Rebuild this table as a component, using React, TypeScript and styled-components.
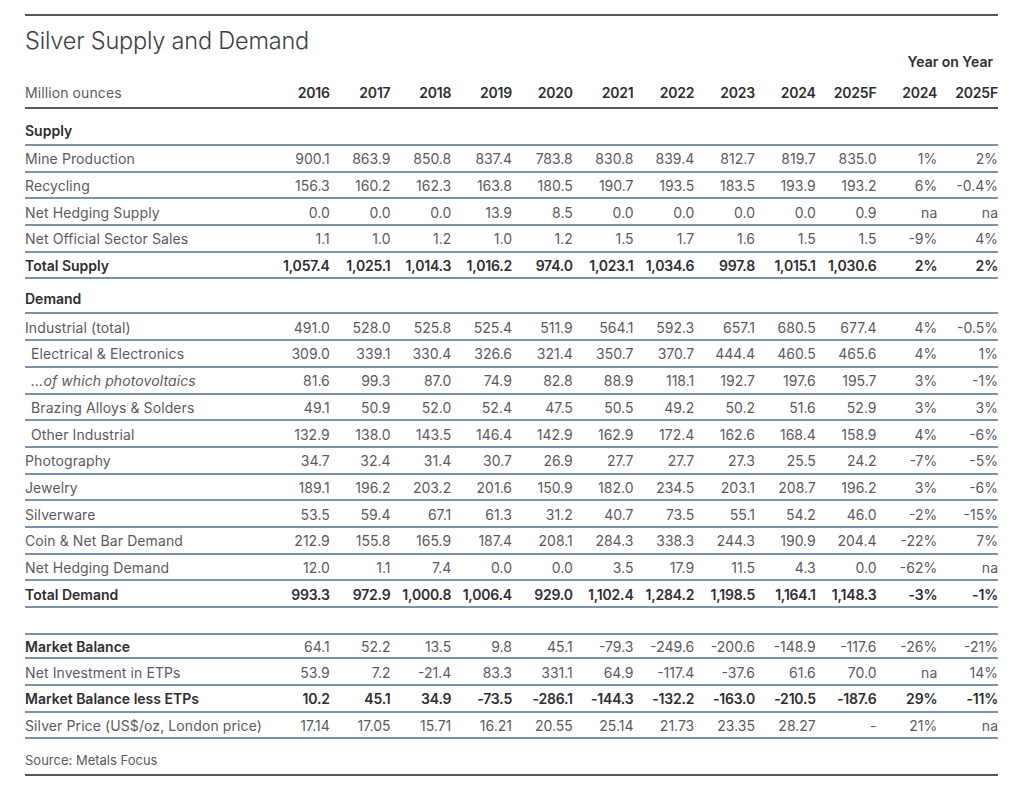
import styled, { createGlobalStyle, css } from "styled-components";

const GlobalStyle = createGlobalStyle`
    html, body {
        margin: 0;
        padding: 0;
        background: #ffffff;
    }
    body {
        font-family: Inter, "Noto Sans", "Liberation Sans", sans-serif;
        color: #5a5b60;
    }
`;

const RULE_BLUE = "#7893ad";
const RULE_DARK = "#56575c";
const TEXT = "#5a5b60";
const STRONG = "#2d2e33";

const Sheet = styled.div`
    width: 973px;
    margin-left: 25px;
    padding-top: 14px;
`;

const TopRule = styled.div`
    border-top: 2px solid ${RULE_DARK};
`;

const Title = styled.h1`
    margin: 13px 0 0;
    font-size: 23.5px;
    line-height: 24px;
    font-weight: 300;
    color: #3e3f44;
    letter-spacing: -0.2px;
`;

const Grid = styled.div`
    display: grid;
    grid-template-columns: 244px repeat(12, 1fr);
    align-items: center;
`;

const YoYRow = styled(Grid)`
    height: 15px;
`;

const YoYLabel = styled.div`
    grid-column: 12 / span 2;
    text-align: right;
    padding-right: 5px;
    font-size: 14px;
    font-weight: 600;
    color: ${STRONG};
`;

const HeaderRow = styled(Grid)`
    height: 41px;
    box-sizing: border-box;
    align-items: end;
    padding-bottom: 6px;
    border-bottom: 2px solid ${RULE_DARK};
`;

const SectionRow = styled(Grid)<{ $tall?: boolean }>`
    height: ${p => (p.$tall ? "37px" : "35px")};
    box-sizing: border-box;
    align-items: end;
    padding-bottom: 5px;
    border-bottom: 2px solid ${RULE_BLUE};
`;

const Row = styled(Grid)<{ $top?: boolean }>`
    height: 26.7px;
    box-sizing: border-box;
    padding-top: 2px;
    border-bottom: 2px solid ${RULE_BLUE};
    ${p => p.$top && css`border-top: 2px solid ${RULE_BLUE};`}
`;

const Spacer = styled.div`
    height: 24.7px;
`;

const Label = styled.div<{ $bold?: boolean; $indent?: boolean; $italic?: boolean }>`
    font-size: 14px;
    line-height: 16px;
    white-space: nowrap;
    color: ${p => (p.$bold ? STRONG : TEXT)};
    font-weight: ${p => (p.$bold ? 600 : 400)};
    font-style: ${p => (p.$italic ? "italic" : "normal")};
    padding-left: ${p => (p.$indent ? "6px" : "0")};
    letter-spacing: ${p => (p.$bold ? "0" : "0.1px")};
`;

const Cell = styled.div<{ $bold?: boolean }>`
    font-size: 14px;
    line-height: 16px;
    text-align: right;
    white-space: nowrap;
    color: ${p => (p.$bold ? STRONG : TEXT)};
    font-weight: ${p => (p.$bold ? 600 : 400)};
    letter-spacing: ${p => (p.$bold ? "-0.2px" : "0")};
`;

const SourceRow = styled.div`
    height: 37px;
    box-sizing: border-box;
    display: flex;
    align-items: center;
    padding-top: 6px;
    font-size: 13px;
    color: ${TEXT};
    border-bottom: 2px solid ${RULE_DARK};
`;

type Line = {
    label: string;
    values: string[];
    bold?: boolean;
    boldLabel?: boolean;
    indent?: boolean;
    italic?: boolean;
    top?: boolean;
};

const years = ["2016", "2017", "2018", "2019", "2020", "2021", "2022", "2023", "2024", "2025F", "2024", "2025F"];

const supply: Line[] = [
    { label: "Mine Production", values: ["900.1", "863.9", "850.8", "837.4", "783.8", "830.8", "839.4", "812.7", "819.7", "835.0", "1%", "2%"] },
    { label: "Recycling", values: ["156.3", "160.2", "162.3", "163.8", "180.5", "190.7", "193.5", "183.5", "193.9", "193.2", "6%", "-0.4%"] },
    { label: "Net Hedging Supply", values: ["0.0", "0.0", "0.0", "13.9", "8.5", "0.0", "0.0", "0.0", "0.0", "0.9", "na", "na"] },
    { label: "Net Official Sector Sales", values: ["1.1", "1.0", "1.2", "1.0", "1.2", "1.5", "1.7", "1.6", "1.5", "1.5", "-9%", "4%"] },
    { label: "Total Supply", bold: true, values: ["1,057.4", "1,025.1", "1,014.3", "1,016.2", "974.0", "1,023.1", "1,034.6", "997.8", "1,015.1", "1,030.6", "2%", "2%"] },
];

const demand: Line[] = [
    { label: "Industrial (total)", values: ["491.0", "528.0", "525.8", "525.4", "511.9", "564.1", "592.3", "657.1", "680.5", "677.4", "4%", "-0.5%"] },
    { label: "Electrical & Electronics", indent: true, values: ["309.0", "339.1", "330.4", "326.6", "321.4", "350.7", "370.7", "444.4", "460.5", "465.6", "4%", "1%"] },
    { label: "...of which photovoltaics", indent: true, italic: true, values: ["81.6", "99.3", "87.0", "74.9", "82.8", "88.9", "118.1", "192.7", "197.6", "195.7", "3%", "-1%"] },
    { label: "Brazing Alloys & Solders", indent: true, values: ["49.1", "50.9", "52.0", "52.4", "47.5", "50.5", "49.2", "50.2", "51.6", "52.9", "3%", "3%"] },
    { label: "Other Industrial", indent: true, values: ["132.9", "138.0", "143.5", "146.4", "142.9", "162.9", "172.4", "162.6", "168.4", "158.9", "4%", "-6%"] },
    { label: "Photography", values: ["34.7", "32.4", "31.4", "30.7", "26.9", "27.7", "27.7", "27.3", "25.5", "24.2", "-7%", "-5%"] },
    { label: "Jewelry", values: ["189.1", "196.2", "203.2", "201.6", "150.9", "182.0", "234.5", "203.1", "208.7", "196.2", "3%", "-6%"] },
    { label: "Silverware", values: ["53.5", "59.4", "67.1", "61.3", "31.2", "40.7", "73.5", "55.1", "54.2", "46.0", "-2%", "-15%"] },
    { label: "Coin & Net Bar Demand", values: ["212.9", "155.8", "165.9", "187.4", "208.1", "284.3", "338.3", "244.3", "190.9", "204.4", "-22%", "7%"] },
    { label: "Net Hedging Demand", values: ["12.0", "1.1", "7.4", "0.0", "0.0", "3.5", "17.9", "11.5", "4.3", "0.0", "-62%", "na"] },
    { label: "Total Demand", bold: true, values: ["993.3", "972.9", "1,000.8", "1,006.4", "929.0", "1,102.4", "1,284.2", "1,198.5", "1,164.1", "1,148.3", "-3%", "-1%"] },
];

const balance: Line[] = [
    { label: "Market Balance", boldLabel: true, top: true, values: ["64.1", "52.2", "13.5", "9.8", "45.1", "-79.3", "-249.6", "-200.6", "-148.9", "-117.6", "-26%", "-21%"] },
    { label: "Net Investment in ETPs", values: ["53.9", "7.2", "-21.4", "83.3", "331.1", "64.9", "-117.4", "-37.6", "61.6", "70.0", "na", "14%"] },
    { label: "Market Balance less ETPs", bold: true, values: ["10.2", "45.1", "34.9", "-73.5", "-286.1", "-144.3", "-132.2", "-163.0", "-210.5", "-187.6", "29%", "-11%"] },
    { label: "Silver Price (US$/oz, London price)", values: ["17.14", "17.05", "15.71", "16.21", "20.55", "25.14", "21.73", "23.35", "28.27", "-", "21%", "na"] },
];

const DataRow = ({ line }: { line: Line }) => (
    <Row $top={line.top}>
        <Label $bold={line.bold || line.boldLabel} $indent={line.indent} $italic={line.italic}>
            {line.label}
        </Label>
        {line.values.map((v, i) => (
            <Cell key={i} $bold={line.bold}>{v}</Cell>
        ))}
    </Row>
);

export default function App() {
    return (
        <>
            <GlobalStyle />
            <Sheet>
                <TopRule />
                <Title>Silver Supply and Demand</Title>
                <YoYRow>
                    <YoYLabel>Year on Year</YoYLabel>
                </YoYRow>
                <HeaderRow>
                    <Label>Million ounces</Label>
                    {years.map((y, i) => (
                        <Cell key={i} $bold>{y}</Cell>
                    ))}
                </HeaderRow>

                <SectionRow $tall>
                    <Label $bold>Supply</Label>
                </SectionRow>
                {supply.map(line => (
                    <DataRow line={line} key={line.label} />
                ))}

                <SectionRow>
                    <Label $bold>Demand</Label>
                </SectionRow>
                {demand.map(line => (
                    <DataRow line={line} key={line.label} />
                ))}

                <Spacer />
                {balance.map(line => (
                    <DataRow line={line} key={line.label} />
                ))}

                <SourceRow>Source: Metals Focus</SourceRow>
            </Sheet>
        </>
    );
}
